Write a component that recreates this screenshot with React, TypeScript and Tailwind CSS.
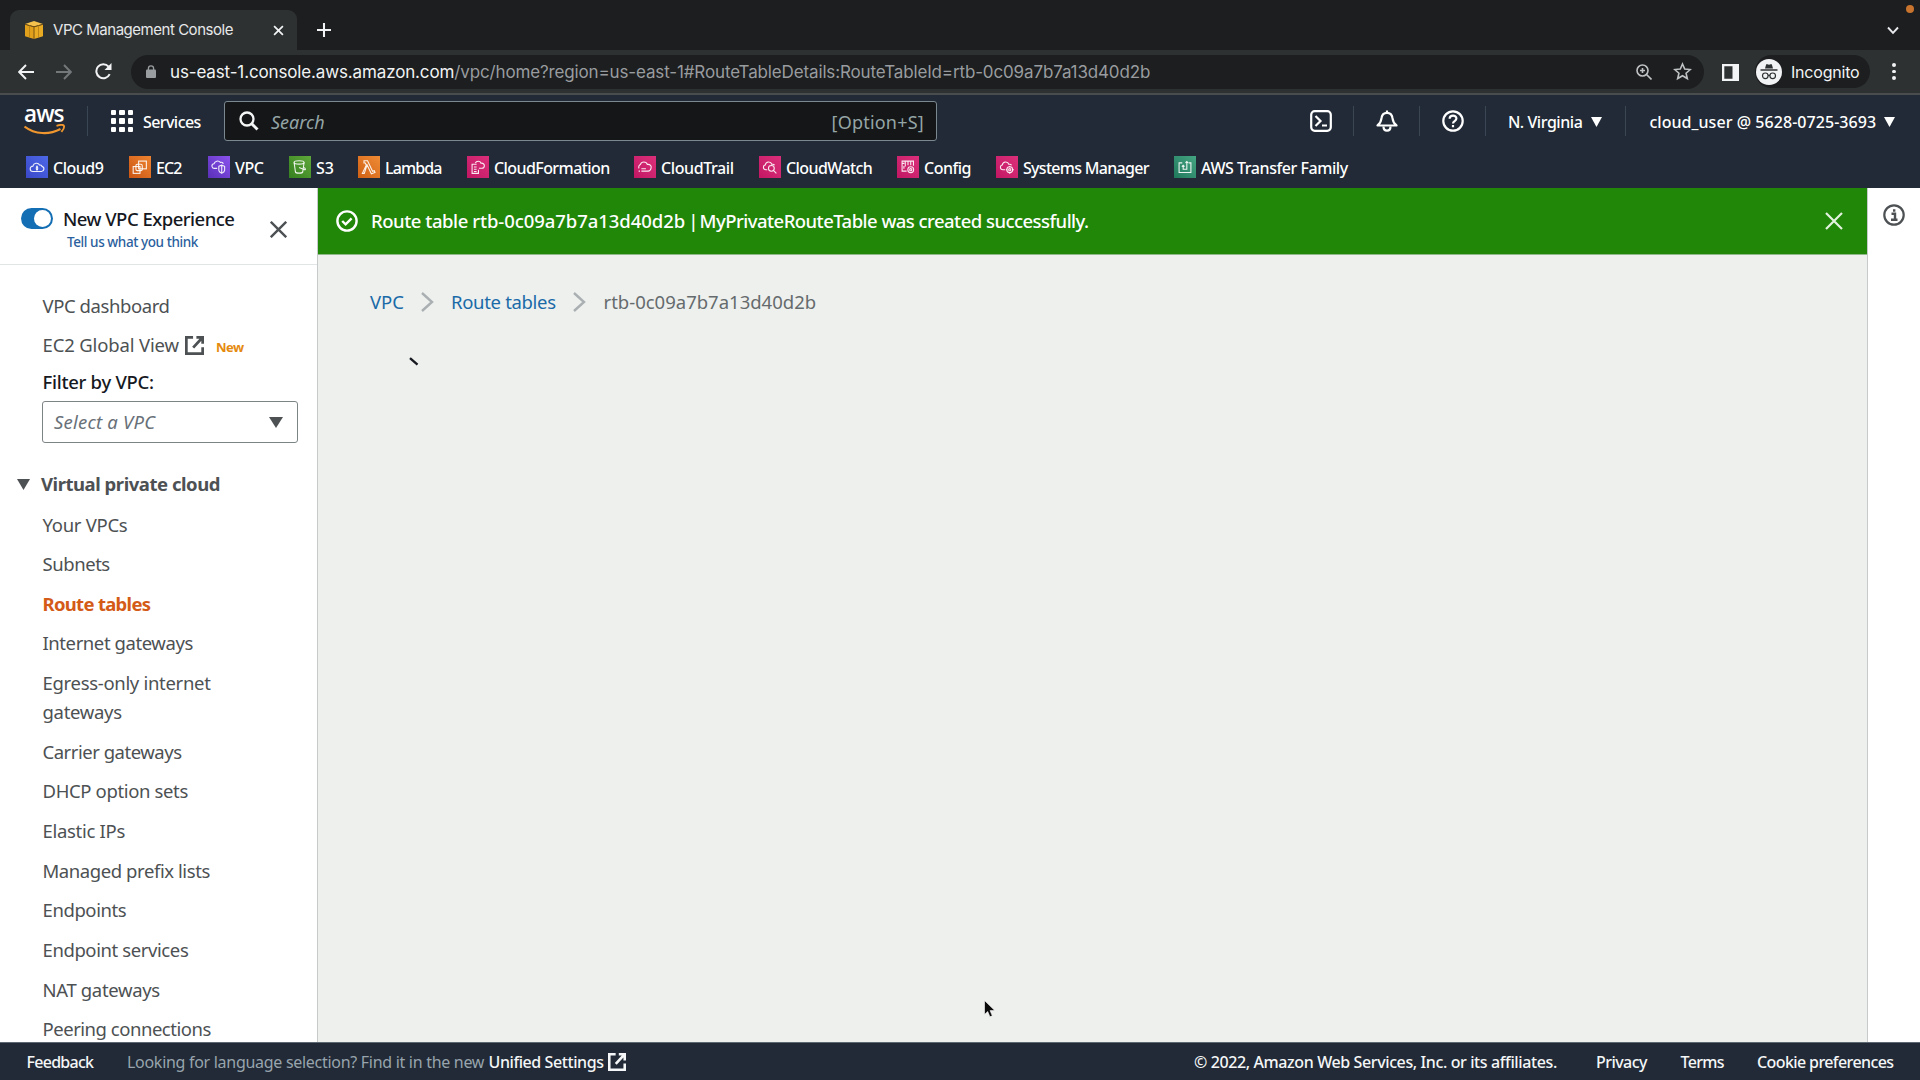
import type { ReactNode } from "react";

const chromeFont = "font-['Inter',sans-serif]";

function Icon({ className, children, box = 24 }: { className: string; children: ReactNode; box?: number }) {
  return (
    <svg viewBox={`0 0 ${box} ${box}`} className={`shrink-0 ${className}`} fill="none" stroke="currentColor" strokeWidth={2}>
      {children}
    </svg>
  );
}

function ExternalIcon({ className }: { className: string }) {
  return (
    <Icon className={className} box={20}>
      <path d="M8.500 1.400H1.400v17.200h17.200v-6.800M12 1.400h6.600v6.800M18.400 1.600L8.600 12.200" strokeWidth={2.900} />
    </Icon>
  );
}

function Caret({ className }: { className: string }) {
  return (
    <svg viewBox="0 0 12 10" preserveAspectRatio="none" className={`shrink-0 ${className}`} fill="currentColor">
      <path d="M0 0h12L6 10z" />
    </svg>
  );
}

const cloud = "M6.500 16h9.500a2.900 2.900 0 0 0 .4-5.700 2 2 0 0 0-2.500-1.400A4 4 0 0 0 6.500 10a3 3 0 0 0 0 6z";

const services: { label: string; width: string; tracking: string; bg: string; icon: ReactNode }[] = [
  {
    label: "Cloud9", width: "w-[103px]", tracking: "tracking-[-0.5px]", bg: "from-[#3a48c8] to-[#4d68e8]",
    icon: <><path d={cloud} /><path d="M11 10c-1 1-1 3.500 0 4.500 1-1 1-3.500 0-4.500z" /></>,
  },
  {
    label: "EC2", width: "w-[79px]", tracking: "tracking-[-0.87px]", bg: "from-[#cb5512] to-[#ee8430]",
    icon: <><rect x="3.500" y="10.500" width="7.500" height="7.500" /><rect x="9.500" y="4.500" width="8.500" height="8.500" /><rect x="6.500" y="8" width="7" height="7" rx="1.500" /></>,
  },
  {
    label: "VPC", width: "w-[81px]", tracking: "tracking-[-0.38px]", bg: "from-[#5a30b8] to-[#8b52ee]",
    icon: <><path d="M9 12.500H6a2.500 2.500 0 0 1-.5-5 4 4 0 0 1 7-1.500c1.500-.5 3 0 3.200 1.600" /><path d="M10.800 10.200L14 9l3.200 1.200v4.300c0 1.500-1.200 2.500-3.200 3.500-2-1-3.200-2-3.200-3.500zM14 9v9" /></>,
  },
  {
    label: "S3", width: "w-[69px]", tracking: "tracking-[0.05px]", bg: "from-[#35801f] to-[#5fa83a]",
    icon: <><ellipse cx="10" cy="6" rx="5.500" ry="1.800" /><path d="M4.500 6l1.500 10.500c.4 1.600 7.600 1.600 8 0L15.500 6M10 11.500l6 2.500c1.500.3 1.300-1.500-.9-2.500" /></>,
  },
  {
    label: "Lambda", width: "w-[109px]", tracking: "tracking-[-0.9px]", bg: "from-[#cf6013] to-[#f08c35]",
    icon: <path d="M5.500 4.200h3.900l5.500 11.500 1.900-.6.800 2-4 1.400-4.700-9.800L5.800 18H3.700l4.300-9-1.100-2.400H5.500z" />,
  },
  {
    label: "CloudFormation", width: "w-[167px]", tracking: "tracking-[-0.58px]", bg: "from-[#c21663] to-[#dc2f7b]",
    icon: <><path d="M9.500 8H4.500v10h7v-4M6.500 11h3M6.500 13.500h3M6.500 16h3" /><path d="M8 6.800C9 4 13.500 4 14.200 6.800c2.200-.3 3.800 1 3.800 2.700 0 1.500-1 2.800-2.800 2.800H12" /></>,
  },
  {
    label: "CloudTrail", width: "w-[125px]", tracking: "tracking-[-0.4px]", bg: "from-[#c21663] to-[#dc2f7b]",
    icon: <><path d="M4.500 12.500a3 3 0 0 1 1.500-4.300C7 4.700 12.500 4.700 13.500 8.200c3.500-.4 4.800 2 4.200 4-.5 2-1.500 3.300-3.200 3.300H7" /><path d="M4 15.500h1.500M7 13h5" /></>,
  },
  {
    label: "CloudWatch", width: "w-[138px]", tracking: "tracking-[-0.58px]", bg: "from-[#c21663] to-[#dc2f7b]",
    icon: <><path d="M8 14H6.500C3 14 3 9.300 5.800 8.800 6.500 4.500 12 4.500 13 8c1.500-.3 2.500.2 3 1.200" /><circle cx="12.500" cy="12.500" r="3.200" /><path d="M15 15l3 3" /></>,
  },
  {
    label: "Config", width: "w-[99px]", tracking: "tracking-[-0.5px]", bg: "from-[#c21663] to-[#dc2f7b]",
    icon: <><path d="M9.500 15.500H4.500V4.500h12.500v5M4.500 7h2.500M8 4.500v6M11 4.500V9M14 4.500V9M6.500 10v3" /><circle cx="14" cy="14" r="3.200" /><circle cx="14" cy="14" r="1.200" /></>,
  },
  {
    label: "Systems Manager", width: "w-[178px]", tracking: "tracking-[-0.7px]", bg: "from-[#c21663] to-[#dc2f7b]",
    icon: <><path d="M9 14H6.500C3 14 3 9.300 5.800 8.800 6.500 4.500 12 4.500 13 8c1.500-.3 2.500.2 3 1.200" /><circle cx="14" cy="14" r="3.200" /><circle cx="14" cy="14" r="1.200" /><path d="M14 9.800v1.500M14 16.800v1.700M9.800 14h1.500M16.800 14h1.700" /></>,
  },
  {
    label: "AWS Transfer Family", width: "w-[180px]", tracking: "tracking-[-0.44px]", bg: "from-[#1f7a5c] to-[#45a583]",
    icon: <><path d="M8 6.500H4.500V17h13V6.500H15" /><path d="M9 9v4.500h4V5M7.500 10.500L9 9l1.500 1.500M11.500 6.500L13 5l1.500 1.500" /></>,
  },
];

const navItems: { label: string; tracking: string; active?: boolean }[] = [
  { label: "Your VPCs", tracking: "tracking-[-0.28px]" },
  { label: "Subnets", tracking: "tracking-[-0.44px]" },
  { label: "Route tables", tracking: "tracking-[-0.7px]", active: true },
  { label: "Internet gateways", tracking: "tracking-[-0.42px]" },
  { label: "Egress-only internet gateways", tracking: "tracking-[-0.31px]" },
  { label: "Carrier gateways", tracking: "tracking-[-0.48px]" },
  { label: "DHCP option sets", tracking: "tracking-[-0.36px]" },
  { label: "Elastic IPs", tracking: "tracking-[-0.3px]" },
  { label: "Managed prefix lists", tracking: "tracking-[-0.42px]" },
  { label: "Endpoints", tracking: "tracking-[-0.4px]" },
  { label: "Endpoint services", tracking: "tracking-[-0.4px]" },
  { label: "NAT gateways", tracking: "tracking-[-0.34px]" },
  { label: "Peering connections", tracking: "tracking-[-0.47px]" },
];

function BrowserTabs() {
  return (
    <div className={`relative flex h-[50px] shrink-0 bg-[#1c1e1f] ${chromeFont}`}>
      <div className="mt-[10px] ml-[10px] flex h-10 w-[287px] items-center rounded-t-[9px] bg-[#2e3132] pl-[15px]">
        <svg viewBox="0 0 18 18" className="h-[18px] w-[18px] shrink-0">
          <path d="M0 3.500L9 6v12l-9-2.700z" fill="#e0a01c" />
          <path d="M18 3.500L9 6v12l9-2.700z" fill="#e9ab24" />
          <path d="M0 3L9 0l9 3-9 2.500z" fill="#f4c24c" />
          <path d="M9 5.500V18M0 3.300l9 2.500 9-2.500" stroke="#6b4a10" strokeWidth=".9" fill="none" />
          <path d="M4.500 4.500v12M13.500 4.500v12" stroke="#b37c14" strokeWidth=".8" fill="none" />
        </svg>
        <span className="ml-[10px] w-[220px] text-[15px] leading-5 tracking-[-0.47px] whitespace-nowrap text-[#e6e8e9]">VPC Management Console</span>
        <Icon className="h-[11px] w-[11px] text-[#f1f3f4]" box={12}>
          <path d="M1.200 1.200l9.600 9.600M10.800 1.200l-9.600 9.600" strokeWidth={1.900} />
        </Icon>
      </div>
      <Icon className="mt-[23px] ml-[20px] h-[14px] w-[14px] text-[#f1f3f4]" box={15}>
        <path d="M7.500 0v15M0 7.500h15" strokeWidth={2.200} />
      </Icon>
      <Icon className="mt-[24px] mr-[21px] ml-auto h-[12px] w-[12px] text-[#e8eaed]" box={12}>
        <path d="M1 3.500L6 8.800l5-5.300" strokeWidth={1.900} />
      </Icon>
      <span className="absolute top-[5px] right-[6px] h-2 w-2 rounded-full bg-[#c9742e]" />
    </div>
  );
}

function AddressBar() {
  return (
    <div className={`flex h-[45px] shrink-0 items-center border-b-2 border-[#4a4d4e] bg-[#2e3132] ${chromeFont}`}>
      <Icon className="ml-[18px] h-4 w-4 text-[#f1f3f4]" box={16}>
        <path d="M16 8H1.500M8 1L1.200 8 8 15" strokeWidth={1.900} />
      </Icon>
      <Icon className="ml-[22px] h-4 w-4 text-[#75787a]" box={16}>
        <path d="M0 8h14.500M8 1l6.800 7L8 15" strokeWidth={1.900} />
      </Icon>
      <Icon className="ml-[23px] h-[17px] w-[17px] text-[#f1f3f4]" box={17}>
        <path d="M14.700 11.200A7 7 0 1 1 13.600 3.600" strokeWidth={2} />
        <path d="M16.500 0v7h-7z" fill="currentColor" stroke="none" />
      </Icon>
      <div className="ml-[19px] flex h-[34px] w-[1573px] shrink-0 items-center rounded-full bg-[#1c1e1f]">
        <svg viewBox="0 0 10 13" className="ml-[15px] h-[13px] w-[10px] shrink-0">
          <path d="M2.400 5V3.500a2.600 2.600 0 0 1 5.200 0V5" stroke="#9a9da0" strokeWidth="1.300" fill="none" />
          <rect y="4.500" width="10" height="8.500" rx="1" fill="#9a9da0" />
        </svg>
        <span className="ml-[14px] text-[17px] leading-6 tracking-[-0.14px] whitespace-nowrap text-[#999c9f]">
          <span className="text-[#f1f3f4]">us-east-1.console.aws.amazon.com</span>/vpc/home?region=us-east-1#RouteTableDetails:RouteTableId=rtb-0c09a7b7a13d40d2b
        </span>
        <Icon className="ml-auto h-4 w-4 text-[#c0c3c5]" box={16}>
          <circle cx="6.500" cy="6.500" r="5.500" strokeWidth={1.600} />
          <path d="M10.500 10.500l5 5M4 6.500h5M6.500 4v5" strokeWidth={1.600} />
        </Icon>
        <Icon className="mr-3 ml-[21px] h-[19px] w-[19px] text-[#c0c3c5]">
          <path d="M12 2.500l2.800 6.400 7 .6-5.300 4.600 1.600 6.800-6.100-3.600-6.100 3.600 1.600-6.800-5.300-4.600 7-.6z" strokeWidth={2} />
        </Icon>
      </div>
      <svg viewBox="0 0 17 17" className="mt-px ml-[18px] h-[17px] w-[17px] shrink-0">
        <path d="M0 0h17v17H0zM2.300 2.300v12.400h8.200V2.300z" fill="#f1f3f4" fillRule="evenodd" />
      </svg>
      <div className="ml-4 flex h-[33px] w-[115px] shrink-0 items-center rounded-full bg-[#1c1e1f]">
        <svg viewBox="0 0 26 26" className="ml-px h-[26px] w-[26px] shrink-0">
          <circle cx="13" cy="13" r="13" fill="#f1f3f4" />
          <path d="M9 9.500l1.200-4.200h1.300l1.500.5 1.500-.5h1.300L17 9.500z" fill="#2e3132" />
          <path d="M4.500 11h17" stroke="#2e3132" strokeWidth="1.500" />
          <g fill="none" stroke="#2e3132" strokeWidth="1.200"><circle cx="9.300" cy="16.800" r="2.800" /><circle cx="16.700" cy="16.800" r="2.800" /><path d="M12.100 16.300h1.800" /></g>
        </svg>
        <span className="ml-[9px] text-[16px] leading-6 tracking-[-0.2px] text-[#f1f3f4]">Incognito</span>
      </div>
      <div className="ml-[22px] flex flex-col gap-[3px]">
        <span className="h-[3.500px] w-[3.500px] rounded-full bg-[#f1f3f4]" />
        <span className="h-[3.500px] w-[3.500px] rounded-full bg-[#f1f3f4]" />
        <span className="h-[3.500px] w-[3.500px] rounded-full bg-[#f1f3f4]" />
      </div>
    </div>
  );
}

function Divider({ className }: { className: string }) {
  return <span className={`h-[30px] w-px shrink-0 bg-[#3b4654] ${className}`} />;
}

function ConsoleHeader() {
  return (
    <header className="flex h-[93px] shrink-0 flex-col bg-[#212a36] text-white">
      <div className="flex h-[52px] items-center">
        <div className="ml-[24px] flex h-[30px] w-[42px] shrink-0 flex-col">
          <span className="h-[18px] font-['Open_Sans',sans-serif] text-[22.500px] leading-[15px] font-semibold tracking-[-0.9px]">aws</span>
          <svg viewBox="0 0 42 12" className="h-3 w-[42px]" fill="none" stroke="#f0962f" strokeWidth="2.200">
            <path d="M.5 2.500C11 10.500 25 11 36.500 5" />
            <path d="M32.500 1.800c3-.9 6.500-1.200 7.300-.2.600 1.200-.5 4.200-2.400 6.300" strokeWidth="1.900" />
          </svg>
        </div>
        <Divider className="ml-[21px]" />
        <div className="ml-[23px] grid grid-cols-3 gap-[3px]">
          {Array.from({ length: 9 }, (_, i) => <span key={i} className="h-[5.300px] w-[5.300px] rounded-[1px] bg-white" />)}
        </div>
        <span className="ml-[10px] w-[81px] pt-px text-[16px] leading-6 font-medium tracking-[-0.55px]">Services</span>
        <div className="flex h-10 w-[713px] shrink-0 items-center rounded-[3px] border border-[#7b8890] bg-[#141618]">
          <Icon className="ml-[14px] h-5 w-5 text-[#f4f5f5]" box={20}>
            <circle cx="8" cy="8" r="6.500" strokeWidth={2.300} />
            <path d="M12.500 12.500l6 6" strokeWidth={3} />
          </Icon>
          <span className="ml-[12px] pt-px text-[18px] leading-6 text-[#95a5a6] italic">Search</span>
          <span className="mr-[12px] ml-auto pt-px text-[18px] leading-6 tracking-[0.2px] text-[#95a5a6]">[Option+S]</span>
        </div>
        <Icon className="ml-[373px] h-[22px] w-[22px]" box={22}>
          <rect x="1.200" y="1.200" width="19.600" height="19.600" rx="3.500" strokeWidth={2.200} />
          <path d="M5.500 6l5 5-5 5M12 15.500h5" strokeWidth={2.200} />
        </Icon>
        <Divider className="ml-[21px]" />
        <Icon className="ml-[22px] h-[22px] w-[22px]" box={22}>
          <path d="M11 .5v2M1.500 15.500C5 13 5 11 5.500 8 6 4.500 8 2.800 11 2.800S16 4.500 16.500 8c.5 3 .5 5 4 7.500z" strokeLinejoin="round" strokeWidth={2.200} />
          <path d="M7.500 16.500c0 5.500 7 5.500 7 0" strokeWidth={2.200} />
        </Icon>
        <Divider className="ml-[21px]" />
        <Icon className="ml-[22px] h-[22px] w-[22px]" box={22}>
          <circle cx="11" cy="11" r="9.700" strokeWidth={2.200} />
          <path d="M7.600 8.700C7.800 4.500 14.400 4.700 14.400 8.500c0 2.500-3.400 2.600-3.400 5M11 15v2.200" strokeWidth={2.200} />
        </Icon>
        <Divider className="ml-[21px]" />
        <span className="ml-[22px] pt-px text-[16px] leading-6 font-medium tracking-[-0.45px] whitespace-nowrap">N. Virginia</span>
        <Caret className="mt-px ml-[9px] h-[10px] w-[11px]" />
        <Divider className="ml-[23px]" />
        <span className="ml-[23px] pt-px text-[16px] leading-6 font-medium tracking-[0.05px] whitespace-nowrap">cloud_user @ 5628-0725-3693</span>
        <Caret className="mt-px ml-2 h-[10px] w-[11px]" />
      </div>
      <nav className="flex h-[40px] items-center pl-[25.500px]">
        {services.map((s) => (
          <div key={s.label} className={`flex shrink-0 items-center ${s.width}`}>
            <span className={`flex h-[22px] w-[22px] shrink-0 items-center justify-center bg-linear-to-tr ${s.bg}`}>
              <Icon className="h-[20px] w-[20px] text-white/90" box={22}><g strokeWidth={1.200}>{s.icon}</g></Icon>
            </span>
            <span className={`ml-[5.500px] pt-px text-[16px] leading-6 font-medium whitespace-nowrap ${s.tracking}`}>{s.label}</span>
          </div>
        ))}
      </nav>
    </header>
  );
}

function Sidebar() {
  return (
    <aside className="flex w-[318px] shrink-0 flex-col overflow-hidden border-r border-[#c6caca] bg-white text-[18.500px] leading-[29.300px] text-[#4d5153]">
      <div className="flex h-[77px] shrink-0 border-b border-[#e2e5e6]">
        <span className="mt-5 ml-[21px] flex h-[21px] w-[32px] shrink-0 items-center justify-end rounded-full bg-[#146eb4] pr-[2px]">
          <span className="h-[17px] w-[17px] rounded-full bg-white" />
        </span>
        <div className="ml-[10px] w-[207px] whitespace-nowrap">
          <div className="mt-[17px] h-[27px] leading-[27px] font-medium tracking-[-0.52px] text-[#16191f]">New VPC Experience</div>
          <div className="ml-[4px] pt-px text-[13.500px] leading-[19px] font-medium tracking-[-0.42px] text-[#2b5f9e]">Tell us what you think</div>
        </div>
        <Icon className="mt-[33px] h-[17px] w-[17px] text-[#4d5153]" box={17}>
          <path d="M.8.800l15.400 15.400M16.200.800L.8 16.200" strokeWidth={2.400} />
        </Icon>
      </div>
      <div className="mt-[26px] ml-[42.500px] h-[29px] shrink-0 tracking-[-0.42px]">VPC dashboard</div>
      <div className="mt-[10.500px] ml-[42.500px] flex h-[29px] shrink-0 items-center whitespace-nowrap">
        <span className="tracking-[-0.15px]">EC2 Global View</span>
        <ExternalIcon className="mt-px ml-[6px] h-[19px] w-[19px]" />
        <span className="mt-[4px] ml-[12px] text-[13px] leading-5 font-bold tracking-[-0.5px] text-[#e58a10]">New</span>
      </div>
      <div className="mt-[7px] ml-[42.500px] h-[29px] shrink-0 font-medium tracking-[-0.29px] text-[#16191f]">Filter by VPC:</div>
      <div className="mt-[5.500px] ml-[42px] flex h-[42px] w-[256px] shrink-0 items-center rounded-[3px] border border-[#7d8486]">
        <span className="ml-[11px] tracking-[0.2px] text-[#687078] italic">Select a VPC</span>
        <Caret className="mr-[14px] ml-auto h-[11px] w-[14px]" />
      </div>
      <div className="mt-[26px] flex h-[29px] shrink-0 items-center">
        <Caret className="mt-px ml-[17px] h-[11px] w-[13px]" />
        <span className="ml-[11px] font-bold tracking-[-0.46px]">Virtual private cloud</span>
      </div>
      <ul className="mt-[11.500px] ml-[42.500px] flex w-[200px] flex-col gap-[10.320px]">
        {navItems.map((n) => (
          <li key={n.label} className={n.active ? `font-bold text-[#d45b17] ${n.tracking}` : n.tracking}>{n.label}</li>
        ))}
      </ul>
    </aside>
  );
}

function Crumb() {
  return (
    <svg viewBox="0 0 13 20" className="h-[20px] w-[13px] shrink-0" fill="none" stroke="#aab0b2" strokeWidth="2.400">
      <path d="M1 1L11 10 1 19" />
    </svg>
  );
}

function Main() {
  return (
    <main className="flex flex-1 flex-col bg-[#eef0ee] text-[18.500px] leading-7">
      <div className="flex h-[67px] shrink-0 items-center border-b border-[#8fb98a] bg-[#218708] text-white">
        <Icon className="ml-[18px] h-[22px] w-[22px]" box={22}>
          <circle cx="11" cy="11" r="9.600" strokeWidth={2.400} />
          <path d="M6.200 11l3.400 3.300 6-6" strokeWidth={2.400} />
        </Icon>
        <span className="ml-[13px] font-medium tracking-[-0.54px] whitespace-nowrap">
          <span className="tracking-[-0.46px]">Route table </span>
          <span className="tracking-[-0.06px]">rtb-0c09a7b7a13d40d2b</span>
          <span className="tracking-[-1.800px]"> | </span>
          MyPrivateRouteTable was created successfully.
        </span>
        <Icon className="mr-[24px] ml-auto h-[18px] w-[18px] text-[#e3f2df]" box={18}>
          <path d="M1 1l16 16M17 1L1 17" strokeWidth={2.200} />
        </Icon>
      </div>
      <div className="mt-[33px] ml-[52px] flex items-center whitespace-nowrap text-[#1a6aa8]">
        <span className="w-[51px]">VPC</span>
        <Crumb />
        <span className="ml-[17px] w-[122px] tracking-[-0.32px]">Route tables</span>
        <Crumb />
        <span className="ml-[17.500px] text-[#656b6d]">rtb-0c09a7b7a13d40d2b</span>
      </div>
      <svg viewBox="0 0 10 9" className="mt-[41px] ml-[91px] h-[9px] w-[10px]">
        <path d="M1 1.200L8.500 7.600" stroke="#16191f" strokeWidth="2.400" />
      </svg>
    </main>
  );
}

function Footer() {
  return (
    <footer className="flex h-[38px] shrink-0 items-center border-t border-[#5d6873] bg-[#212a36] text-[16px] leading-6 font-medium whitespace-nowrap text-[#f4f6f7]">
      <span className="ml-[26.500px] w-[100.500px] tracking-[-0.73px]">Feedback</span>
      <span className="w-[361.500px] font-normal tracking-[-0.29px] text-[#98a4ad]">Looking for language selection? Find it in the new</span>
      <span className="tracking-[-0.42px]">Unified Settings</span>
      <ExternalIcon className="ml-1 h-[18px] w-[18px]" />
      <span className="ml-auto w-[402px] tracking-[-0.39px]">© 2022, Amazon Web Services, Inc. or its affiliates.</span>
      <span className="w-[84.500px] tracking-[-0.54px]">Privacy</span>
      <span className="w-[76.500px] tracking-[-0.69px]">Terms</span>
      <span className="w-[163px] tracking-[-0.6px]">Cookie preferences</span>
    </footer>
  );
}

export default function App() {
  return (
    <div className="relative flex h-[1080px] w-[1920px] flex-col overflow-hidden font-['Noto_Sans',sans-serif]">
      <BrowserTabs />
      <AddressBar />
      <ConsoleHeader />
      <div className="flex min-h-0 flex-1">
        <Sidebar />
        <Main />
        <aside className="flex w-[53px] shrink-0 justify-center border-l border-[#c6caca] bg-white pt-4">
          <Icon className="h-[22px] w-[22px] text-[#4d5153]" box={22}>
            <circle cx="11" cy="11" r="9.700" strokeWidth={2.200} />
            <path d="M8.500 9.800H12v6M8 15.800h6.500M11.200 5.200v2.500" strokeWidth={2.400} />
          </Icon>
        </aside>
      </div>
      <Footer />
      <svg viewBox="0 0 12 18" className="absolute top-[1000px] left-[984px] h-[18px] w-[12px]">
        <path d="M.5.500v14l3.200-3 2.200 5.300 2.400-1-2.200-5.200h4.700z" fill="#0b0b0b" stroke="#fff" strokeWidth=".6" />
      </svg>
    </div>
  );
}
